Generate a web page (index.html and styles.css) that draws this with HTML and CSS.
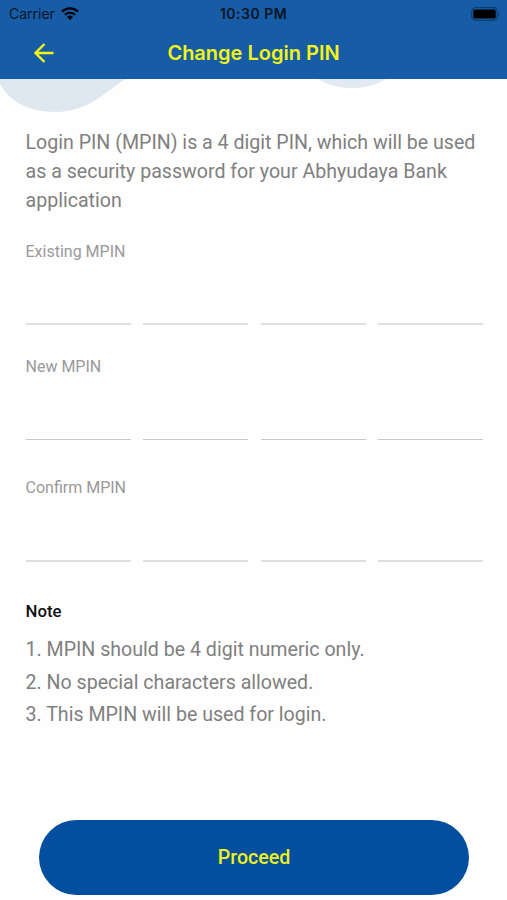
FILE: index.html
```html
<!DOCTYPE html>
<html lang="en">
<head>
    <meta charset="UTF-8">
    <meta name="viewport" content="width=device-width, initial-scale=1.0">
    <title>Change Login PIN</title>
    <link rel="stylesheet" href="styles.css">
</head>
<body>
    <!-- Header -->
    <header>
        <div class="status-bar">
            <div class="carrier">
                <span>Carrier</span>
                <svg class="wifi" viewBox="0 0 18 13" width="18" height="13">
                    <path d="M1 4.6a11.6 11.6 0 0 1 16 0" fill="none" stroke="#000" stroke-width="2.3"/>
                    <path d="M3.9 7.8a7.4 7.4 0 0 1 10.2 0" fill="none" stroke="#000" stroke-width="2.2"/>
                    <path d="M6 10a4.3 4.3 0 0 1 6 0l-3 3z"/>
                </svg>
            </div>
            <div class="time">10:30 PM</div>
            <svg class="battery" viewBox="0 0 30 14" width="30" height="14">
                <rect x="0.7" y="0.7" width="25.6" height="12.6" rx="4" fill="none" stroke="#0d3c70" stroke-width="1.2"/>
                <rect x="2.3" y="2.5" width="22.4" height="9" rx="1.5"/>
                <path d="M27.5 5v4q2-2 0-4z" fill="#0d3c70"/>
            </svg>
        </div>
        <div class="title-bar">
            <a href="#back" class="back" aria-label="Back">
                <svg viewBox="0 0 20 20" width="20" height="20">
                    <path d="M19.5 10H1.5M10.5 1L1.5 10L10.5 19" fill="none" stroke="#f3f416" stroke-width="2.4"/>
                </svg>
            </a>
            <h1>Change Login PIN</h1>
        </div>
    </header>

    <!-- Background waves -->
    <svg class="waves" viewBox="0 0 507 40" width="507" height="40">
        <path d="M0 0H126C106 12 88 33 56 33C28 33 9 22 0 5z" fill="#dfe8f0"/>
        <path d="M318 0H386C366 12 338 12 318 0z" fill="#e1e9f2"/>
    </svg>

    <!-- Main Content -->
    <main>
        <p class="intro">Login PIN (MPIN) is a 4 digit PIN, which will be used as a security password for your Abhyudaya Bank application</p>

        <form>
            <div class="field existing">
                <label>Existing MPIN</label>
                <div class="digits"><span></span><span></span><span></span><span></span></div>
            </div>
            <div class="field new">
                <label>New MPIN</label>
                <div class="digits"><span></span><span></span><span></span><span></span></div>
            </div>
            <div class="field confirm">
                <label>Confirm MPIN</label>
                <div class="digits"><span></span><span></span><span></span><span></span></div>
            </div>

            <section class="note">
                <h2>Note</h2>
                <p>1. MPIN should be 4 digit numeric only.</p>
                <p>2. No special characters allowed.</p>
                <p>3. This MPIN will be used for login.</p>
            </section>

            <button type="button">Proceed</button>
        </form>
    </main>
</body>
</html>
```
FILE: styles.css
```css
* {
    box-sizing: border-box;
}

body {
    margin: 0;
    height: 900px;
    overflow: hidden;
    background-color: #fefefe;
    font-family: Roboto, sans-serif;
    color: #808080;
}

header {
    height: 79px;
    background-color: #175ca6;
}

.status-bar {
    display: grid;
    grid-template-columns: 1fr auto 1fr;
    align-items: center;
    height: 27px;
    padding: 0 6px 0 9px;
    font-family: Inter, sans-serif;
    font-size: 14px;
    color: #071526;
}

.carrier {
    display: flex;
    align-items: center;
    gap: 6px;
}

.time {
    margin-right: 3px;
    font-weight: 600;
    letter-spacing: 0.5px;
}

.battery {
    justify-self: end;
}

.title-bar {
    display: grid;
    grid-template-columns: 54px 1fr 54px;
    align-items: center;
    height: 52px;
}

.back {
    display: flex;
    justify-content: flex-end;
}

h1 {
    margin: 0;
    font-family: Inter, sans-serif;
    font-size: 20px;
    font-weight: 600;
    text-align: center;
    color: #f3f416;
}

.waves {
    display: block;
}

main {
    padding: 9px 24px 0 25.5px;
}

.intro {
    margin: 0;
    font-size: 19.6px;
    line-height: 29px;
}

.field {
    height: 86px;
    font-size: 16px;
    color: #999;
}

.existing {
    margin-top: 27px;
    margin-bottom: 29px;
}

.new {
    margin-bottom: 35px;
}

.field label {
    display: block;
    height: 20px;
    line-height: 20px;
}

.digits {
    display: grid;
    grid-template-columns: repeat(4, 105px);
    justify-content: space-between;
    height: 63px;
}

.digits span {
    border-bottom: 1px solid #c8c8c8;
}

.existing .digits span,
.confirm .digits span {
    border-bottom: 2px solid #dedede;
}

.confirm .digits {
    height: 64px;
}

.note {
    padding-top: 37px;
}

.note h2 {
    margin: 0 0 13px;
    font-size: 16.8px;
    font-weight: 500;
    line-height: 20px;
    color: #111;
}

.note p {
    margin: 0;
    font-size: 19.6px;
    line-height: 32.5px;
}

button {
    display: block;
    width: 430px;
    height: 75px;
    margin: 88px 0 0 13.5px;
    border: none;
    border-radius: 38px;
    background-color: #014f9e;
    font-family: Roboto, sans-serif;
    font-size: 19.6px;
    font-weight: 500;
    color: #f0f01c;
}
```
